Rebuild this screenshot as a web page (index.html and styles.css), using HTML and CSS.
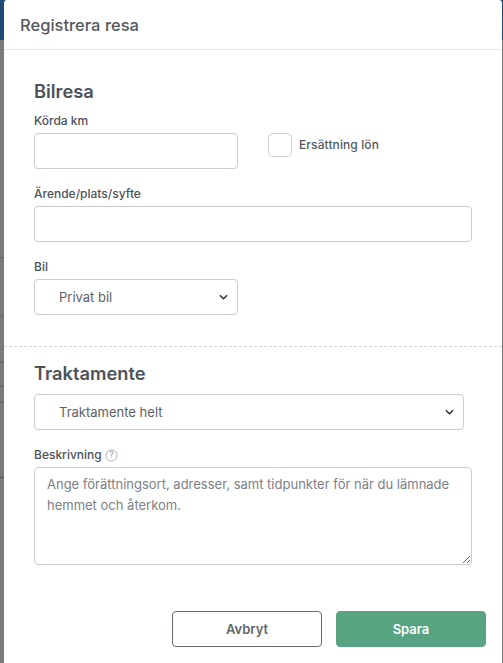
FILE: index.html
```html
<!DOCTYPE html>
<html lang="sv">
<head>
<meta charset="utf-8">
<title>Registrera resa</title>
<link rel="stylesheet" href="styles.css">
</head>
<body>
<div class="backdrop" aria-hidden="true">
  <div class="bd-top"></div>
  <div class="bd-line bd-l1"></div>
  <div class="bd-line bd-l2"></div>
  <div class="bd-line bd-l3"></div>
  <div class="bd-line bd-l4"></div>
  <div class="bd-line bd-l5"></div>
  <div class="bd-mark"></div>
</div>
<main class="modal">
  <header class="modal-header"><h1 class="modal-title">Registrera resa</h1></header>
  <form class="modal-body">
    <section class="section section-car">
      <h2 class="heading">Bilresa</h2>
      <div class="row-km">
        <div class="field field-km">
          <label class="label" for="km">Körda km</label>
          <input class="control" id="km" type="text">
        </div>
        <label class="check"><input class="check-box" type="checkbox"><span class="check-text">Ersättning lön</span></label>
      </div>
      <div class="field field-purpose">
        <label class="label" for="purpose">Ärende/plats/syfte</label>
        <input class="control" id="purpose" type="text">
      </div>
      <div class="field field-car">
        <label class="label" for="car">Bil</label>
        <div class="select-wrap">
          <select class="control select" id="car"><option>Privat bil</option></select>
          <svg class="chev" viewBox="0 0 10 6" width="9" height="6"><path d="M1 1l4 4 4-4" fill="none" stroke="#23272e" stroke-width="1.5"/></svg>
        </div>
      </div>
    </section>
    <section class="section section-allow">
      <h2 class="heading">Traktamente</h2>
      <div class="select-wrap select-allow">
        <select class="control select" aria-label="Traktamente"><option>Traktamente helt</option></select>
        <svg class="chev" viewBox="0 0 10 6" width="9" height="6"><path d="M1 1l4 4 4-4" fill="none" stroke="#23272e" stroke-width="1.5"/></svg>
      </div>
      <div class="field field-desc">
        <label class="label label-help" for="desc">Beskrivning
          <svg class="help" viewBox="0 0 14 14" width="13" height="13"><circle cx="7" cy="7" r="6" fill="none" stroke="#a8acb2" stroke-width="1"/><text x="7" y="10.2" text-anchor="middle" class="help-q">?</text></svg>
        </label>
        <textarea class="control textarea" id="desc" placeholder="Ange förättningsort, adresser, samt tidpunkter för när du lämnade hemmet och återkom."></textarea>
      </div>
    </section>
    <footer class="actions">
      <button class="btn btn-cancel" type="button">Avbryt</button>
      <button class="btn btn-save" type="button">Spara</button>
    </footer>
  </form>
</main>
</body>
</html>
```

FILE: styles.css
```css
* { box-sizing: border-box; }
html, body { margin: 0; height: 100%; }
body {
  position: relative;
  overflow: hidden;
  background: #7a7a7a;
  font-family: Inter, "Liberation Sans", sans-serif;
  color: #4e5259;
  padding: 0 1px 0 4px;
}
.backdrop { position: absolute; inset: 0; }
.bd-top { position: absolute; left: 0; right: 0; top: 0; height: 40px; background: #1f4a74; }
.bd-line { position: absolute; left: 0; width: 4px; height: 1px; background: #666; }
.bd-l1 { top: 257px; }
.bd-l2 { top: 316px; }
.bd-l3 { top: 362px; }
.bd-l4 { top: 386px; }
.bd-l5 { top: 402px; }
.bd-mark { position: absolute; left: 0; top: 477px; width: 4px; height: 1px; background: #8c3a4c; }
.modal {
  position: relative;
  height: 663px;
  background: #fff;
  border-radius: 3px 3px 0 0;
}
.modal-header {
  height: 50px;
  border-bottom: 1px solid #e6e7e9;
  padding: 0 16px;
  display: flex;
  align-items: center;
}
.modal-title { margin: 0; font-size: 16.5px; font-weight: 500; color: #54585f; }
.modal-body { display: block; }
.section { padding: 0 30px; }
.section-car { padding-top: 30px; height: 297px; border-bottom: 1px dashed #d6d7d9; }
.section-allow { padding-top: 15px; }
.heading { margin: 0; font-size: 18.3px; line-height: 23px; font-weight: 600; color: #4e5259; }
.label { display: block; font-size: 12px; line-height: 16px; font-weight: 500; color: #4e5259; padding-top: 1px; height: 17px; margin-bottom: 4px; }
.row-km { display: flex; align-items: flex-start; margin-top: 9px; }
.field-km { width: 204px; }
.check { display: flex; align-items: center; gap: 7px; margin: 21px 0 0 30px; font-size: 12px; letter-spacing: .1px; font-weight: 500; color: #54585f; }
.check-box { appearance: none; margin: 0; width: 24px; height: 24px; border: 1px solid #c9ccd3; border-radius: 5px; background: #fff; }
.check-text { position: relative; top: -1px; }
.control {
  display: block;
  width: 100%;
  height: 36px;
  border: 1px solid #c9ccd3;
  border-radius: 4px;
  background: #fff;
  font-family: inherit;
  color: #5c6066;
  outline: none;
}
.field-purpose { margin-top: 16px; width: 438px; }
.field-car { margin-top: 16px; width: 204px; }
.select-wrap { position: relative; }
.select { appearance: none; padding: 0 24px; font-size: 13px; }
.chev { position: absolute; right: 10px; top: 15px; }
.select-allow { margin-top: 9px; width: 430px; }
.field-desc { margin-top: 16px; width: 438px; }
.label-help { display: flex; align-items: center; gap: 3px; }
.help-q { font-size: 9px; fill: #a8acb2; font-family: Inter, sans-serif; }
.textarea {
  height: 98px;
  padding: 6px 12px;
  font-size: 13px;
  line-height: 21px;
  resize: vertical;
}
.textarea::placeholder { color: #7c8087; opacity: 1; }
.actions { display: flex; justify-content: flex-end; gap: 14px; margin-top: 46px; padding-right: 16px; }
.btn {
  width: 150px;
  height: 36px;
  border-radius: 4px;
  font-family: inherit;
  font-size: 13px;
  font-weight: 600;
}
.btn-cancel { background: #fff; border: 1px solid #666a72; color: #62666d; }
.btn-save { background: #58a382; border: 1px solid #58a382; color: #fff; }
```
